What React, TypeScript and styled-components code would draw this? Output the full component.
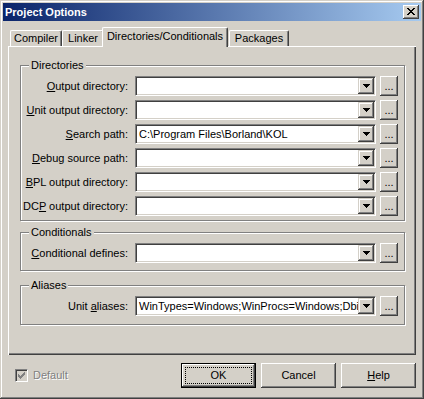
import React from "react";
import styled, { createGlobalStyle } from "styled-components";

const face = "#d4d0c8";
const shadow = "#808080";
const dark = "#404040";

const GlobalStyle = createGlobalStyle`
  html, body {
    margin: 0;
    padding: 0;
    background: ${face};
  }
  body {
    font-family: "Liberation Sans", Arial, sans-serif;
    font-size: 11px;
    line-height: 13px;
    color: #000;
  }
`;

// classic push button bevel
const pushBevel = `
  background: ${face};
  box-shadow: inset -1px -1px 0 ${dark}, inset 1px 1px 0 #fff,
    inset -2px -2px 0 ${shadow}, inset 2px 2px 0 ${face};
`;

// caption / combo arrow bevel
const arrowBevel = `
  background: ${face};
  box-shadow: inset -1px -1px 0 ${dark}, inset 1px 1px 0 ${face},
    inset -2px -2px 0 ${shadow}, inset 2px 2px 0 #fff;
`;

const Window = styled.div`
  box-sizing: border-box;
  width: 424px;
  height: 399px;
  padding: 3px;
  background: ${face};
  box-shadow: inset -1px -1px 0 ${dark}, inset 1px 1px 0 ${face},
    inset -2px -2px 0 ${shadow}, inset 2px 2px 0 #fff;
  display: flex;
  flex-direction: column;
`;

const TitleBar = styled.div`
  height: 18px;
  display: flex;
  align-items: center;
  padding-left: 2px;
  background: linear-gradient(to right, #0a246a, #a6caf0);
`;

const Title = styled.div`
  flex: 1;
  color: #fff;
  font-weight: bold;
  font-size: 11px;
`;

const CloseButton = styled.div`
  box-sizing: border-box;
  width: 16px;
  height: 14px;
  margin-right: 2px;
  display: flex;
  align-items: center;
  justify-content: center;
  padding: 0 1px 1px 0;
  ${pushBevel}
`;

const Body = styled.div`
  flex: 1;
  display: flex;
  flex-direction: column;
  padding: 0 5px;
`;

const TabStrip = styled.div`
  height: 19px;
  margin-top: 6px;
  padding-left: 2px;
  display: flex;
  align-items: flex-end;
`;

const Tab = styled.div<{ $active?: boolean; $width: number; $offset?: number }>`
  box-sizing: border-box;
  width: ${({ $width }) => $width}px;
  height: ${({ $active }) => ($active ? 20 : 16)}px;
  margin-bottom: ${({ $active }) => ($active ? -1 : 0)}px;
  margin-left: ${({ $active, $offset = 0 }) => ($active ? -2 : $offset)}px;
  position: ${({ $active }) => ($active ? "relative" : "static")};
  z-index: ${({ $active }) => ($active ? 1 : 0)};
  padding-bottom: ${({ $active }) => ($active ? 2 : 0)}px;
  display: flex;
  align-items: center;
  justify-content: center;
  background: ${face};
  border-top: 1px solid #fff;
  border-left: 1px solid #fff;
  border-right: 1px solid ${dark};
  border-radius: 2px 2px 0 0;
  box-shadow: inset -1px 0 0 ${shadow};
  white-space: nowrap;
`;

const Page = styled.div`
  box-sizing: border-box;
  height: 309px;
  padding: 19px 11px 0 12px;
  display: flex;
  flex-direction: column;
  background: ${face};
  box-shadow: inset 1px 1px 0 #fff, inset -1px -1px 0 ${dark},
    inset -2px -2px 0 ${shadow};
`;

const Group = styled.div<{ $gap: number; $padBottom: number }>`
  position: relative;
  margin-top: ${({ $gap }) => $gap}px;
  padding: 10px 0 ${({ $padBottom }) => $padBottom}px 0;
  border: 1px solid ${shadow};
  box-shadow: inset 1px 1px 0 #fff, 1px 1px 0 #fff;
  display: flex;
  flex-direction: column;
  gap: 4px;
`;

const GroupLabel = styled.div`
  position: absolute;
  top: -7px;
  left: 8px;
  padding: 0 2px;
  background: ${face};
  line-height: 13px;
`;

const Row = styled.div`
  display: flex;
  align-items: center;
  height: 20px;
`;

const Label = styled.div`
  width: 107px;
  margin-right: 7px;
  text-align: right;
  white-space: nowrap;
`;

const Combo = styled.div`
  box-sizing: border-box;
  width: 241px;
  height: 20px;
  padding: 1px;
  display: flex;
  background: #fff;
  border: 1px solid;
  border-color: ${shadow} #fff #fff ${shadow};
  box-shadow: inset 1px 1px 0 ${dark}, inset -1px -1px 0 ${face};
`;

const ComboText = styled.div`
  flex: 1;
  min-width: 0;
  padding-left: 2px;
  line-height: 16px;
  white-space: nowrap;
  overflow: hidden;
`;

const DropButton = styled.div`
  box-sizing: border-box;
  width: 16px;
  height: 16px;
  display: flex;
  align-items: center;
  justify-content: center;
  ${arrowBevel}
`;

const BrowseButton = styled.div`
  box-sizing: border-box;
  width: 18px;
  height: 20px;
  margin-left: 4px;
  display: flex;
  align-items: flex-end;
  justify-content: center;
  padding-bottom: 4px;
  font-size: 11px;
  line-height: 11px;
  ${pushBevel}
`;

const Footer = styled.div`
  height: 25px;
  margin-top: 8px;
  display: flex;
  align-items: center;
`;

const CheckWrap = styled.div`
  flex: 1;
  display: flex;
  align-items: center;
  padding-left: 7px;
`;

const CheckBox = styled.div`
  box-sizing: border-box;
  width: 13px;
  height: 13px;
  margin-right: 5px;
  display: flex;
  align-items: center;
  justify-content: center;
  background: ${face};
  border: 1px solid;
  border-color: ${shadow} #fff #fff ${shadow};
  box-shadow: inset 1px 1px 0 ${dark}, inset -1px -1px 0 ${face};
`;

const DisabledText = styled.span`
  color: ${shadow};
  text-shadow: 1px 1px 0 #fff;
`;

const Buttons = styled.div`
  display: flex;
  gap: 5px;
`;

const Button = styled.div<{ $default?: boolean }>`
  position: relative;
  box-sizing: border-box;
  width: 75px;
  height: 25px;
  display: flex;
  align-items: center;
  justify-content: center;
  border: ${({ $default }) => ($default ? "1px solid #000" : "none")};
  ${pushBevel}

  &::after {
    content: "";
    display: ${({ $default }) => ($default ? "block" : "none")};
    position: absolute;
    inset: 3px;
    border: 1px dotted #000;
  }
`;

const CloseGlyph = () => (
  <svg width="8" height="7" viewBox="0 0 8 7" shapeRendering="crispEdges">
    <path
      d="M0 0h2v1h-2zM6 0h2v1h-2zM1 1h2v1h-2zM5 1h2v1h-2zM2 2h4v1h-4zM3 3h2v1h-2zM2 4h4v1h-4zM1 5h2v1h-2zM5 5h2v1h-2zM0 6h2v1h-2zM6 6h2v1h-2z"
      fill="#000"
    />
  </svg>
);

const ArrowGlyph = () => (
  <svg width="7" height="4" viewBox="0 0 7 4" shapeRendering="crispEdges">
    <path d="M0 0h7v1h-7zM1 1h5v1h-5zM2 2h3v1h-3zM3 3h1v1h-1z" fill="#000" />
  </svg>
);

const CheckGlyph = () => (
  <svg width="7" height="7" viewBox="0 0 7 7" shapeRendering="crispEdges">
    <path
      d="M6 0h1v1h-1zM5 1h2v1h-2zM0 2h1v1h-1zM4 2h3v1h-3zM0 3h2v1h-2zM3 3h3v1h-3zM0 4h5v1h-5zM1 5h3v1h-3zM2 6h1v1h-1z"
      fill={shadow}
    />
  </svg>
);

interface FieldProps {
    label: React.ReactNode;
    value?: string;
}

const Field = ({ label, value }: FieldProps) => (
    <Row>
        <Label>{label}</Label>
        <Combo>
            <ComboText>{value}</ComboText>
            <DropButton>
                <ArrowGlyph />
            </DropButton>
        </Combo>
        <BrowseButton>...</BrowseButton>
    </Row>
);

export default function App() {
    return (
        <>
            <GlobalStyle />
            <Window>
                <TitleBar>
                    <Title>Project Options</Title>
                    <CloseButton>
                        <CloseGlyph />
                    </CloseButton>
                </TitleBar>
                <Body>
                    <TabStrip>
                        <Tab $width={52}>Compiler</Tab>
                        <Tab $width={42}>Linker</Tab>
                        <Tab $width={126} $active>
                            Directories/Conditionals
                        </Tab>
                        <Tab $width={60} $offset={1}>
                            Packages
                        </Tab>
                    </TabStrip>
                    <Page>
                        <Group $gap={0} $padBottom={4}>
                            <GroupLabel>Directories</GroupLabel>
                            <Field label={<><u>O</u>utput directory:</>} />
                            <Field label={<><u>U</u>nit output directory:</>} />
                            <Field label={<><u>S</u>earch path:</>} value="C:\Program Files\Borland\KOL" />
                            <Field label={<><u>D</u>ebug source path:</>} />
                            <Field label={<><u>B</u>PL output directory:</>} />
                            <Field label={<>DC<u>P</u> output directory:</>} />
                        </Group>
                        <Group $gap={11} $padBottom={7}>
                            <GroupLabel>Conditionals</GroupLabel>
                            <Field label={<><u>C</u>onditional defines:</>} />
                        </Group>
                        <Group $gap={14} $padBottom={8}>
                            <GroupLabel>Aliases</GroupLabel>
                            <Field
                                label={<>Unit <u>a</u>liases:</>}
                                value="WinTypes=Windows;WinProcs=Windows;Dbi"
                            />
                        </Group>
                    </Page>
                    <Footer>
                        <CheckWrap>
                            <CheckBox>
                                <CheckGlyph />
                            </CheckBox>
                            <DisabledText>Default</DisabledText>
                        </CheckWrap>
                        <Buttons>
                            <Button $default>OK</Button>
                            <Button>Cancel</Button>
                            <Button>
                                <span>
                                    <u>H</u>elp
                                </span>
                            </Button>
                        </Buttons>
                    </Footer>
                </Body>
            </Window>
        </>
    );
}
